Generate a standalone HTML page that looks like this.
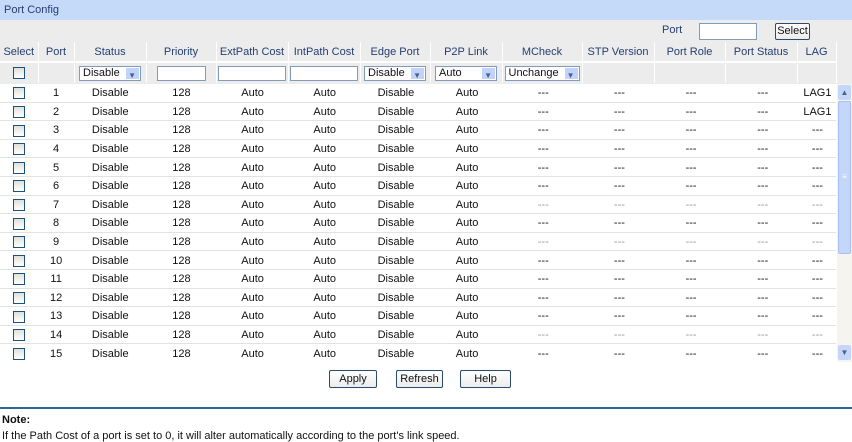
<!DOCTYPE html>
<html><head><style>
body{margin:0;width:852px;height:442px;background:#fff;font-family:"Liberation Sans",sans-serif;font-size:11px;position:relative;overflow:hidden}
.t{position:absolute;left:0;top:0;width:852px;height:20px;background:#c5d9f9;color:#243e70;line-height:20px;text-indent:4px}
.g{position:absolute;left:0;top:20px;width:852px;height:64px;background:#ececec}
table{position:absolute;left:0;top:42px;border-collapse:collapse;table-layout:fixed;width:836px}
td{text-align:center;padding:0;height:17.6px;line-height:14px;border-right:1px solid #fff;border-bottom:1px solid #e2e2e2;white-space:nowrap;overflow:hidden;color:#111}
tr.h td{height:19px;color:#243e70;border-bottom:2px solid #fff}
tr.f td{height:20px;border-bottom:0}
tr.d td{border-right:0;padding-top:1px;height:16.6px}
.cb{display:inline-block;width:10px;height:10px;border:1px solid #1c5180;background:linear-gradient(#e0e0da,#fff);vertical-align:middle}
.sel{display:inline-block;height:15px;border:1px solid #7f9db9;background:#fff;text-align:left;position:relative;box-sizing:border-box;line-height:13px;padding-left:3px;vertical-align:middle}
.sel:after{content:"";position:absolute;right:1px;top:1px;width:13px;height:11px;background:#c1d3fb}
.sel i{position:absolute;right:4px;top:2px;font-style:normal;font-size:8px;color:#4d6185;z-index:1}
.in{display:inline-block;height:15px;border:1px solid #7f9db9;background:#fff;box-sizing:border-box;vertical-align:middle}
.btn{position:absolute;top:370px;height:18px;border:1px solid #2a4a6e;border-radius:2px;background:linear-gradient(#fff,#ececec);box-sizing:border-box;text-align:center;line-height:16px;color:#111}
.lt td:nth-child(n+9){color:#999}
</style></head><body>
<div class="t">Port Config</div>
<div class="g"></div>
<div style="position:absolute;left:662px;top:24px;color:#243e70">Port</div>
<div class="in" style="position:absolute;left:699px;top:23px;width:58px;height:17px"></div>
<div class="btn" style="left:775px;top:23px;width:35px;height:17px;line-height:15px">Select</div>
<table>
<colgroup><col style="width:38px"><col style="width:36px"><col style="width:72px"><col style="width:70px"><col style="width:72px"><col style="width:72px"><col style="width:70px"><col style="width:72px"><col style="width:80px"><col style="width:72px"><col style="width:71px"><col style="width:72px"><col style="width:39px"></colgroup>
<tr class="h"><td>Select</td><td>Port</td><td>Status</td><td>Priority</td><td>ExtPath Cost</td><td>IntPath Cost</td><td>Edge Port</td><td>P2P Link</td><td>MCheck</td><td>STP Version</td><td>Port Role</td><td>Port Status</td><td>LAG</td></tr>
<tr class="f"><td><span class="cb"></span></td><td></td><td><span class="sel" style="width:62px">Disable<i>▼</i></span></td><td><span class="in" style="width:49px"></span></td><td><span class="in" style="width:68px"></span></td><td><span class="in" style="width:68px"></span></td><td><span class="sel" style="width:62px">Disable<i>▼</i></span></td><td><span class="sel" style="width:62px">Auto<i>▼</i></span></td><td><span class="sel" style="width:75px">Unchange<i>▼</i></span></td><td></td><td></td><td></td><td></td></tr>
</table>
<table style="top:84px">
<colgroup><col style="width:38px"><col style="width:36px"><col style="width:72px"><col style="width:70px"><col style="width:72px"><col style="width:72px"><col style="width:70px"><col style="width:72px"><col style="width:80px"><col style="width:72px"><col style="width:71px"><col style="width:72px"><col style="width:37px"></colgroup>
<tr class="d"><td><span class="cb"></span></td><td>1</td><td>Disable</td><td>128</td><td>Auto</td><td>Auto</td><td>Disable</td><td>Auto</td><td>---</td><td>---</td><td>---</td><td>---</td><td>LAG1</td></tr>
<tr class="d"><td><span class="cb"></span></td><td>2</td><td>Disable</td><td>128</td><td>Auto</td><td>Auto</td><td>Disable</td><td>Auto</td><td>---</td><td>---</td><td>---</td><td>---</td><td>LAG1</td></tr>
<tr class="d"><td><span class="cb"></span></td><td>3</td><td>Disable</td><td>128</td><td>Auto</td><td>Auto</td><td>Disable</td><td>Auto</td><td>---</td><td>---</td><td>---</td><td>---</td><td>---</td></tr>
<tr class="d"><td><span class="cb"></span></td><td>4</td><td>Disable</td><td>128</td><td>Auto</td><td>Auto</td><td>Disable</td><td>Auto</td><td>---</td><td>---</td><td>---</td><td>---</td><td>---</td></tr>
<tr class="d"><td><span class="cb"></span></td><td>5</td><td>Disable</td><td>128</td><td>Auto</td><td>Auto</td><td>Disable</td><td>Auto</td><td>---</td><td>---</td><td>---</td><td>---</td><td>---</td></tr>
<tr class="d"><td><span class="cb"></span></td><td>6</td><td>Disable</td><td>128</td><td>Auto</td><td>Auto</td><td>Disable</td><td>Auto</td><td>---</td><td>---</td><td>---</td><td>---</td><td>---</td></tr>
<tr class="d lt"><td><span class="cb"></span></td><td>7</td><td>Disable</td><td>128</td><td>Auto</td><td>Auto</td><td>Disable</td><td>Auto</td><td>---</td><td>---</td><td>---</td><td>---</td><td>---</td></tr>
<tr class="d"><td><span class="cb"></span></td><td>8</td><td>Disable</td><td>128</td><td>Auto</td><td>Auto</td><td>Disable</td><td>Auto</td><td>---</td><td>---</td><td>---</td><td>---</td><td>---</td></tr>
<tr class="d lt"><td><span class="cb"></span></td><td>9</td><td>Disable</td><td>128</td><td>Auto</td><td>Auto</td><td>Disable</td><td>Auto</td><td>---</td><td>---</td><td>---</td><td>---</td><td>---</td></tr>
<tr class="d"><td><span class="cb"></span></td><td>10</td><td>Disable</td><td>128</td><td>Auto</td><td>Auto</td><td>Disable</td><td>Auto</td><td>---</td><td>---</td><td>---</td><td>---</td><td>---</td></tr>
<tr class="d"><td><span class="cb"></span></td><td>11</td><td>Disable</td><td>128</td><td>Auto</td><td>Auto</td><td>Disable</td><td>Auto</td><td>---</td><td>---</td><td>---</td><td>---</td><td>---</td></tr>
<tr class="d"><td><span class="cb"></span></td><td>12</td><td>Disable</td><td>128</td><td>Auto</td><td>Auto</td><td>Disable</td><td>Auto</td><td>---</td><td>---</td><td>---</td><td>---</td><td>---</td></tr>
<tr class="d"><td><span class="cb"></span></td><td>13</td><td>Disable</td><td>128</td><td>Auto</td><td>Auto</td><td>Disable</td><td>Auto</td><td>---</td><td>---</td><td>---</td><td>---</td><td>---</td></tr>
<tr class="d lt"><td><span class="cb"></span></td><td>14</td><td>Disable</td><td>128</td><td>Auto</td><td>Auto</td><td>Disable</td><td>Auto</td><td>---</td><td>---</td><td>---</td><td>---</td><td>---</td></tr>
<tr class="d"><td style="border:0"><span class="cb"></span></td><td style="border:0">15</td><td style="border:0">Disable</td><td style="border:0">128</td><td style="border:0">Auto</td><td style="border:0">Auto</td><td style="border:0">Disable</td><td style="border:0">Auto</td><td style="border:0">---</td><td style="border:0">---</td><td style="border:0">---</td><td style="border:0">---</td><td style="border:0">---</td></tr>
</table>
<div style="position:absolute;left:837px;top:84px;width:15px;height:278px;background:#f5f4ef">
<div style="position:absolute;left:1px;top:1px;width:13px;height:15px;background:#c5d6fb;border-radius:2px;font-size:8px;color:#4d6185;text-align:center;line-height:15px">▲</div>
<div style="position:absolute;left:1px;top:17px;width:13px;height:153px;background:#c5d6fb;border:1px solid #a8bff0;box-sizing:border-box;border-radius:2px;font-size:8px;color:#fff;text-align:center;line-height:150px">≡</div>
<div style="position:absolute;left:1px;top:261px;width:13px;height:15px;background:#c5d6fb;border-radius:2px;font-size:8px;color:#4d6185;text-align:center;line-height:15px">▼</div>
</div>
<div class="btn" style="left:329px;width:48px">Apply</div>
<div class="btn" style="left:396px;width:47px">Refresh</div>
<div class="btn" style="left:460px;width:51px">Help</div>
<div style="position:absolute;left:0;top:407px;width:852px;height:2px;background:#2c6893"></div>
<div style="position:absolute;left:2px;top:414px;font-weight:bold;color:#111">Note:</div>
<div style="position:absolute;left:2px;top:430px;color:#111">If the Path Cost of a port is set to 0, it will alter automatically according to the port's link speed.</div>
</body></html>
